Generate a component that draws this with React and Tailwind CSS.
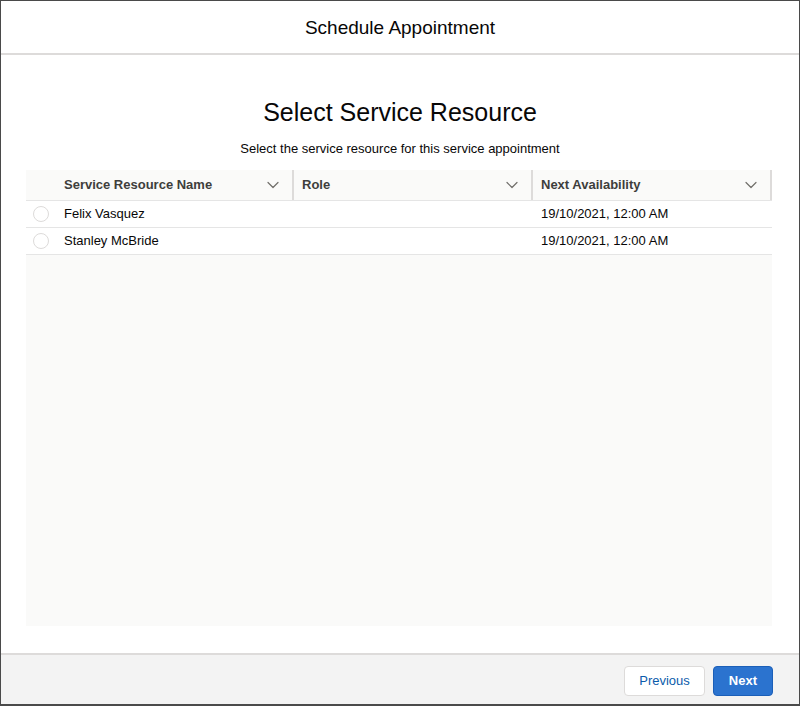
import React from 'react';

const font = { fontFamily: '"Liberation Sans", Arial, sans-serif' };

// small down chevron used in the column headers
const Chevron = () => (
    <svg width="14" height="14" viewBox="0 0 14 14" className="shrink-0">
        <path d="M2 4.5 L7 9.5 L12 4.5" fill="none" stroke="#706e6b" strokeWidth="1.2" strokeLinecap="round" strokeLinejoin="round" />
    </svg>
);

const rows = [
    { name: 'Felix Vasquez', role: '', next: '19/10/2021, 12:00 AM' },
    { name: 'Stanley McBride', role: '', next: '19/10/2021, 12:00 AM' },
];

const HeaderCell = ({ label, first }) => (
    <div className={`flex items-center justify-between h-[30px] border-r-2 border-[#dddbda] ${first ? 'pl-[38px] pr-[12px]' : 'pl-[8px] pr-[12px]'}`}>
        <span className="text-[13px] font-bold text-[#3e3e3c]">{label}</span>
        <Chevron />
    </div>
);

const App = () => {
    return (
        <div style={font} className="w-[800px] h-[706px] flex flex-col bg-white border border-b-2 border-[#4a4a4a] text-[#080707]">
            {/* HEADER */}
            <header className="h-[54px] shrink-0 flex items-center justify-center border-b-2 border-[#dddbda]">
                <h2 className="text-[19px] leading-none">Schedule Appointment</h2>
            </header>

            {/* BODY */}
            <main className="flex-1 flex flex-col px-[25px] pt-[41px] pb-[27px]">
                <h1 className="text-center text-[25px] leading-[32px]">Select Service Resource</h1>
                <p className="text-center text-[13px] leading-[18px] mt-[12px]">Select the service resource for this service appointment</p>

                <div className="mt-[12px] flex-1 w-[746px] bg-[#fafaf9]">
                    <div className="grid grid-cols-[268px_239px_239px] border-b border-[#e5e5e5]">
                        <HeaderCell label="Service Resource Name" first />
                        <HeaderCell label="Role" />
                        <HeaderCell label="Next Availability" />
                    </div>
                    {rows.map((r) => (
                        <div key={r.name} className="grid grid-cols-[268px_239px_239px] h-[27px] bg-white border-b border-[#e5e5e5] text-[13px]">
                            <div className="flex items-center">
                                <span className="w-[16px] h-[16px] rounded-full border border-[#dddbda] bg-white ml-[7px] mr-[15px]" />
                                <span>{r.name}</span>
                            </div>
                            <div className="flex items-center pl-[9px]">{r.role}</div>
                            <div className="flex items-center pl-[8px]">{r.next}</div>
                        </div>
                    ))}
                </div>
            </main>

            {/* FOOTER */}
            <footer className="h-[51px] shrink-0 flex items-center justify-end gap-[8px] pr-[26px] pt-[3px] bg-[#f3f3f3] border-t-2 border-[#dddbda]">
                <button className="h-[30px] px-[14px] rounded-[4px] border border-[#dddbda] bg-white text-[13px] text-[#0b5cab]">Previous</button>
                <button className="h-[30px] px-[15px] rounded-[4px] border border-[#1b5fb8] bg-[#2b73cf] text-[13px] font-bold text-white">Next</button>
            </footer>
        </div>
    );
};

export default App;
